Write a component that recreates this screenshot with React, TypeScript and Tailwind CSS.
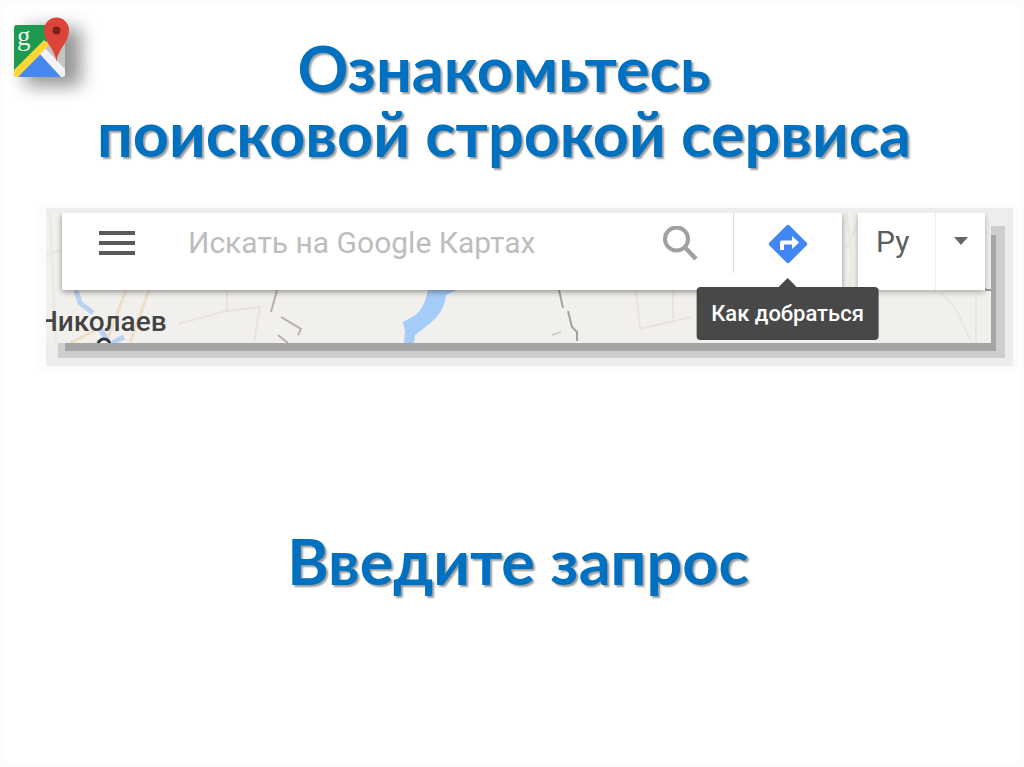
const MapsLogo = () => (
  <svg viewBox="0 0 110 110" className="absolute left-0 top-0 w-[110px] h-[110px]" role="img" aria-label="Google Maps">
    <filter id="soft" x="-50%" y="-50%" width="200%" height="200%">
      <feGaussianBlur stdDeviation="9" />
    </filter>
    <rect x="25" y="28" width="56" height="58" fill="#000" opacity="0.42" filter="url(#soft)" />
    <clipPath id="tile">
      <rect x="14" y="25" width="51" height="52" rx="3" />
    </clipPath>
    <g clipPath="url(#tile)">
      <rect x="14" y="25" width="51" height="52" fill="#c4c4c4" />
      <path d="M14 25H53L47 41L14 72Z" fill="#1d9a50" />
      <path d="M17 77L42 53L65 77Z" fill="#4688ee" />
      <path d="M38 52L44 47L65 69V77H61Z" fill="#f3f2f6" />
      <path d="M14 70L44 40L49 45L18 77H14Z" fill="#fcd635" />
    </g>
    <text x="17" y="45" fontSize="27" fontFamily="Liberation Serif, serif" fill="#e8f5ec">g</text>
    <path d="M56.500 62C55 48 44 43 44 30A12.500 12.500 0 0 1 69 30C69 43 58 48 56.500 62Z" fill="#dc4437" />
    <circle cx="56.500" cy="30.500" r="4" fill="#7c2118" />
  </svg>
);

const MapBackground = () => (
  <svg
    viewBox="0 0 945 130"
    preserveAspectRatio="xMidYMid slice"
    className="absolute inset-0 w-full h-full bg-[#f2f0ed]"
    fill="none"
    aria-hidden="true"
  >
    <path d="M4 0L10 130M0 42L18 36M800 0C804 24 809 50 802 78M815 5L800 35" stroke="#e9eae2" strokeWidth="3" />
    <path d="M80 77L60 130M103 77L84 130M24 130L48 118" stroke="#eddfc3" strokeWidth="3" />
    <path d="M30 77L34 90L47 100M54 116L62 128M78 124L66 130" stroke="#b9d1f3" strokeWidth="5" />
    <path d="M132 111L180 98L214 94L208 130M181 78V98M590 77L594 116L645 104M627 77V105" stroke="#e6e3e0" strokeWidth="2" />
    <path d="M894 78L910 96L925 128M930 82V130" stroke="#e8e8da" strokeWidth="2" />
    <path d="M231 77L225 99M235 104L255 116L252 122M232 122L242 130" stroke="#b4b0ae" strokeWidth="2" />
    <path d="M513 77L517 95M522 98L526 114L531 119V128" stroke="#a2a39e" strokeWidth="2" />
    <path d="M506 122L515 119" stroke="#d0d0cc" strokeWidth="2" />
    <path d="M382 77C379 91 375 99 366 104L357 109L359 118L358 130H368L369 122L382 112C395 102 399 92 400 82L411 77Z" fill="#a5cbf8" />
    <circle cx="58" cy="132" r="6" fill="#fff" stroke="#333" strokeWidth="3" />
    <path d="M936 72L940 77H945" stroke="#999" strokeWidth="2" />
  </svg>
);

const DirectionsIcon = () => (
  <svg viewBox="0 0 40 40" className="w-10 h-10" aria-hidden="true">
    <path d="M18.500 1.500Q20 0 21.500 1.500L38.500 18.500Q40 20 38.500 21.500L21.500 38.500Q20 40 18.500 38.500L1.500 21.500Q0 20 1.500 18.500Z" fill="#4285f4" />
    <path d="M12 26V18.500Q12 16.500 14 16.500H24V12L31 18.500L24 25V20.500H16V26Z" fill="#fff" />
  </svg>
);

const SearchBar = () => (
  <form
    className="flex flex-1 min-w-0 items-center bg-white shadow-[0_2px_6px_rgba(0,0,0,0.4)]"
    onSubmit={(e) => e.preventDefault()}
  >
    <button type="button" aria-label="Меню" className="shrink-0 ml-9 p-px">
      <svg viewBox="0 0 36 26" className="w-9 h-[26px] -translate-y-2" fill="#5a5a5a" aria-hidden="true">
        <path d="M0 0H36V4H0ZM0 10H36V14H0ZM0 20H36V24H0Z" />
      </svg>
    </button>
    <input
      type="text"
      aria-label="Искать на Google Картах"
      placeholder="Искать на Google Картах"
      className="flex-1 min-w-0 ml-[52px] pb-[18px] text-[30px] leading-9 outline-none placeholder:text-[#bdbdbd] placeholder:opacity-100"
    />
    <button type="submit" aria-label="Поиск" className="shrink-0 mx-[34px] pb-4">
      <svg viewBox="0 0 36 36" className="w-9 h-9" fill="none" stroke="#a0a0a0" aria-hidden="true">
        <circle cx="13.500" cy="13" r="11.500" strokeWidth="4" />
        <path d="M21.500 21L33 33" strokeWidth="4.500" />
      </svg>
    </button>
    <div className="relative flex w-[109px] shrink-0 justify-center self-stretch">
      <div className="absolute left-0 top-0 h-[60px] border-l border-[#dcdcdc]" />
      <button type="button" aria-describedby="directions-tip" aria-label="Как добраться" className="pb-4">
        <DirectionsIcon />
      </button>
      <div
        id="directions-tip"
        role="tooltip"
        className="absolute top-[74px] left-1/2 z-10 -translate-x-1/2 rounded-sm bg-[#484848] px-[15px] py-3 text-[22px] leading-[29px] font-medium whitespace-nowrap text-white"
      >
        <svg viewBox="0 0 20 10" className="absolute -top-[9px] left-1/2 w-5 h-[10px] -translate-x-1/2" aria-hidden="true">
          <path d="M0 10L10 0L20 10Z" fill="#484848" />
        </svg>
        Как добраться
      </div>
    </div>
  </form>
);

const LanguageSelect = () => (
  <div className="relative w-[127px] shrink-0 bg-white shadow-[0_2px_6px_rgba(0,0,0,0.3)]">
    <select aria-label="Язык" className="h-full w-full appearance-none pl-[18px] pb-5 text-[30px] text-[#5c5c5c] outline-none">
      <option>Ру</option>
    </select>
    <div className="pointer-events-none absolute inset-y-0 right-0 w-[50px] border-l border-[#ececec]">
      <svg viewBox="0 0 14 8" className="mx-auto mt-6 w-[14px] h-2" fill="#666" aria-hidden="true">
        <path d="M0 0H14L7 8Z" />
      </svg>
    </div>
  </div>
);

export default function App() {
  return (
    <main className="relative min-h-screen bg-white pt-[35px] font-['Lato','Open_Sans',sans-serif] shadow-[inset_0_0_0_4px_#fcfcfc]">
      <MapsLogo />
      <h1 className="pr-4 text-center text-[63px] leading-[65px] font-bold text-[#0070c0] [text-shadow:2px_2px_2px_rgba(0,0,0,0.4)]">
        Ознакомьтесь
        <br />
        поисковой строкой сервиса
      </h1>

      <section className="relative mt-12 mr-[33px] ml-[46px] overflow-hidden font-['Roboto',sans-serif] shadow-[12px_15px_0_-7px_#a5a5a5,13px_14px_0_1px_#cecece,11px_6px_0_11px_#ededed,11px_12px_0_11px_#ededed,9px_9px_0_18px_#fcfcfc]">
        <MapBackground />
        <div className="relative flex h-[77px] gap-4 pr-[6px] pl-4">
          <SearchBar />
          <LanguageSelect />
        </div>
        <p className="relative -ml-2 pt-[14px] pb-[3px] text-[28px] leading-9 font-medium text-[#444] [text-shadow:0_0_2px_#fff]">Николаев</p>
      </section>

      <h2 className="mt-[185px] pl-3 text-center text-[63px] leading-[65px] font-bold text-[#0070c0] [text-shadow:2px_2px_2px_rgba(0,0,0,0.4)]">
        Введите запрос
      </h2>
    </main>
  );
}
